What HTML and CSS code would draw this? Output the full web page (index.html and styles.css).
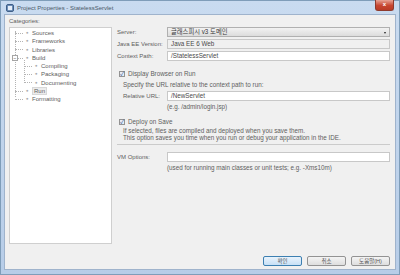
FILE: index.html
```html
<!DOCTYPE html>
<html lang="ko">
<head>
    <meta charset="UTF-8">
    <title>Project Properties - StatelessServlet</title>
    <link rel="stylesheet" href="styles.css">
</head>
<body>
<div class="window">
    <div class="titlebar">
        <svg class="app-icon" width="8" height="8" viewBox="0 0 8 8">
            <rect x="0.5" y="0.5" width="7" height="7" rx="1.5" fill="#6e8fb8" stroke="#3f5f88"/>
            <rect x="2" y="2" width="4" height="4" fill="#e6eef8"/>
        </svg>
        <span class="title">Project Properties - StatelessServlet</span>
        <div class="close-btn">x</div>
    </div>

    <div class="content">
        <div class="left-col">
            <div class="cat-label">Categories:</div>
            <div class="tree">
                <div class="tree-lines"></div>
                <div class="node"><span class="hline"></span><span class="leaf">&#8902;</span>Sources</div>
                <div class="node"><span class="hline"></span><span class="leaf">&#8902;</span>Frameworks</div>
                <div class="node"><span class="hline"></span><span class="leaf">&#8902;</span>Libraries</div>
                <div class="node"><span class="expander">&minus;</span><span class="hline short"></span><span class="leaf">&#8902;</span>Build</div>
                <div class="children">
                    <div class="node"><span class="hline"></span><span class="leaf">&#8902;</span>Compiling</div>
                    <div class="node"><span class="hline"></span><span class="leaf">&#8902;</span>Packaging</div>
                    <div class="node last"><span class="hline"></span><span class="leaf">&#8902;</span>Documenting</div>
                </div>
                <div class="node"><span class="hline"></span><span class="leaf">&#8902;</span><span class="selected">Run</span></div>
                <div class="node last"><span class="hline"></span><span class="leaf">&#8902;</span>Formatting</div>
            </div>
        </div>

        <div class="right-col">
            <div class="row">
                <label>Server:</label>
                <div class="combo">글래스피시 v3 도메인<span class="arrow"></span></div>
            </div>
            <div class="row">
                <label>Java EE Version:</label>
                <div class="field disabled">Java EE 6 Web</div>
            </div>
            <div class="row">
                <label>Context Path:</label>
                <div class="field">/StatelessServlet</div>
            </div>

            <div class="check-row top-gap"><span class="check">&#10003;</span>Display Browser on Run</div>
            <div class="note indent">Specify the URL relative to the context path to run:</div>
            <div class="row indent">
                <label class="short">Relative URL:</label>
                <div class="field">/NewServlet</div>
            </div>
            <div class="hint">(e.g. /admin/login.jsp)</div>

            <div class="check-row"><span class="check">&#10003;</span>Deploy on Save</div>
            <div class="note indent tight">If selected, files are compiled and deployed when you save them.</div>
            <div class="note indent tight">This option saves you time when you run or debug your application in the IDE.</div>

            <div class="separator"></div>

            <div class="row">
                <label>VM Options:</label>
                <div class="field"></div>
            </div>
            <div class="hint">(used for running main classes or unit tests; e.g. -Xms10m)</div>
        </div>

        <div class="buttons">
            <button class="btn default">확인</button>
            <button class="btn">취소</button>
            <button class="btn">도움말(H)</button>
        </div>
    </div>
</div>
</body>
</html>
```

FILE: styles.css
```css
/* Reset */
* {
    margin: 0;
    padding: 0;
    box-sizing: border-box;
}

body {
    width: 400px;
    height: 275px;
    overflow: hidden;
    font-family: 'Liberation Sans', 'Noto Sans CJK KR', sans-serif;
    font-size: 6px;
    color: #5e5e5e;
}

/* Window frame */
.window {
    width: 400px;
    height: 275px;
    display: flex;
    flex-direction: column;
    background: linear-gradient(to bottom, #c9dbf0, #b7cde8);
    border: 1px solid #7f9db9;
    padding: 0 3px 4px 3px;
}

.titlebar {
    height: 13px;
    display: flex;
    align-items: center;
    gap: 3px;
    padding-left: 2px;
    position: relative;
}

.title {
    font-size: 6px;
    color: #4a5868;
}

.close-btn {
    position: absolute;
    top: -1px;
    right: 2px;
    width: 19px;
    height: 11px;
    background: linear-gradient(to bottom, #e8a395, #c74631 55%, #b93b26);
    border: 1px solid #8e3a2d;
    border-top: none;
    border-radius: 0 0 3px 3px;
    color: #fff;
    font-weight: bold;
    font-size: 6px;
    text-align: center;
    line-height: 9px;
}

/* Dialog body */
.content {
    flex: 1;
    background: #f0f0f0;
    border: 1px solid #9fb3cc;
    display: grid;
    grid-template-columns: 103px 1fr;
    grid-template-rows: 1fr auto;
    column-gap: 5px;
    padding: 2px 5px 3px 4px;
}

/* Category tree */
.left-col {
    display: flex;
    flex-direction: column;
}

.cat-label {
    height: 10px;
    line-height: 9px;
}

.tree {
    height: 217px;
    background: #fff;
    border: 1px solid #cfcfcf;
    padding: 1px 0 0 4px;
    position: relative;
}

.tree-lines {
    position: absolute;
    left: 5px;
    top: 3px;
    height: 66px;
    border-left: 1px dotted #b4b4b4;
}

.node {
    height: 8.3px;
    line-height: 8.3px;
    display: flex;
    align-items: center;
    position: relative;
    white-space: nowrap;
}

.hline {
    width: 8px;
    border-top: 1px dotted #b4b4b4;
    margin-left: 1px;
}

.hline.short {
    margin-left: 0;
}

.leaf {
    width: 8px;
    font-size: 7px;
    color: #8a8a8a;
    text-align: center;
    margin-right: 1px;
}

.expander {
    position: absolute;
    left: -2px;
    width: 6px;
    height: 6px;
    background: #fff;
    border: 1px solid #a5a5a5;
    font-size: 5px;
    line-height: 4px;
    text-align: center;
    color: #444;
    z-index: 1;
}

.expander + .hline {
    margin-left: 4px;
    width: 5px;
}

.children {
    padding-left: 9px;
    position: relative;
}

.children::before {
    content: "";
    position: absolute;
    left: 10px;
    top: -2px;
    height: 23px;
    border-left: 1px dotted #b4b4b4;
}

.selected {
    background: #ececec;
    border: 1px solid #d8d8d8;
    padding: 0 1px;
    line-height: 6px;
}

/* Right settings pane */
.right-col {
    padding-top: 9px;
    display: flex;
    flex-direction: column;
    font-size: 6.3px;
}

.row {
    display: flex;
    align-items: center;
    height: 12px;
}

.row label {
    width: 50px;
    flex-shrink: 0;
    white-space: nowrap;
    font-size: 6px;
}

.row.indent label.short {
    width: 44px;
}

.combo, .field {
    flex: 1;
    height: 10px;
    border: 1px solid #c8c8c8;
    background: #fff;
    padding-left: 3px;
    line-height: 8px;
    color: #4a4a4a;
    position: relative;
    white-space: nowrap;
}

.combo {
    background: linear-gradient(to bottom, #f2f2f2, #dcdcdc);
    border-color: #b0b0b0;
    color: #3a3a3a;
}

.arrow {
    position: absolute;
    right: 3px;
    top: 4px;
    border-left: 1.5px solid transparent;
    border-right: 1.5px solid transparent;
    border-top: 2px solid #222;
}

.field.disabled {
    background: #f0f0f0;
}

.check-row {
    height: 11px;
    display: flex;
    align-items: center;
    padding-left: 2px;
    margin-top: 5px;
}

.check-row.top-gap {
    margin-top: 6px;
}

.check {
    width: 6px;
    height: 6px;
    border: 1px solid #939393;
    background: #e8eef6;
    color: #2c4f8c;
    font-size: 6px;
    line-height: 4px;
    text-align: center;
    margin-right: 3px;
}

.note {
    height: 11px;
    line-height: 11px;
    white-space: nowrap;
}

.note.tight {
    height: 7px;
    line-height: 7px;
}

.note.tight:first-of-type {
    margin-top: 3px;
}

.indent {
    padding-left: 6px;
}

.hint {
    padding-left: 50px;
    height: 9px;
    line-height: 9px;
}

.separator {
    border-top: 1px solid #cbcbcb;
    margin: 3px 0 6px 0;
}

/* Bottom buttons */
.buttons {
    grid-column: 1 / 3;
    display: flex;
    justify-content: flex-end;
    gap: 5px;
    padding-top: 11px;
}

.btn {
    width: 39px;
    height: 10px;
    font-family: 'Liberation Sans', 'Noto Sans CJK KR', sans-serif;
    font-size: 5.5px;
    color: #555;
    background: linear-gradient(to bottom, #f4f4f4, #dedede);
    border: 1px solid #939393;
    border-radius: 2px;
}

.btn.default {
    background: linear-gradient(to bottom, #e9f3fc, #c7e0f6);
    border-color: #3c7fb1;
}
```
